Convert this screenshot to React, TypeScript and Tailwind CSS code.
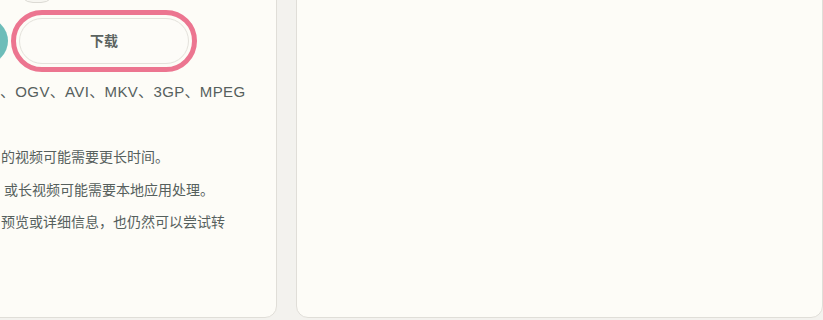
import React from "react";

export default function App() {
  const font = {
    fontFamily: '"Liberation Sans", "Noto Sans CJK SC", sans-serif',
  };
  return (
    <div
      className="flex h-[320px] w-[823px] overflow-hidden bg-[#f3f2ee] pb-[2px] gap-[19px]"
      style={font}
    >
      {/* Left panel (cropped) */}
      <div className="-ml-[60px] -mt-[40px] flex w-[337px] shrink-0 flex-col rounded-[12px] border border-[#e0ded8] bg-[#fdfcf7] pl-[59px] pt-[12px] text-[#56605d]">
        <div className="flex h-[30px]">
          <div className="ml-[18px] h-[30px] w-[38px] rounded-full border border-[#dcdad4] bg-[#f7f6f1]" />
        </div>
        <div className="mt-[15px] flex h-[46px] items-center">
          <div className="-ml-[38px] h-[46px] w-[46px] shrink-0 rounded-full bg-[#6dbdb9]" />
          <button className="ml-[11px] flex h-[46px] w-[170px] shrink-0 items-center justify-center rounded-full border border-[#e4e2dc] bg-[#fdfcf8] text-[14px] font-bold text-[#5b6360] outline-[5px] outline-offset-[3px] outline-solid outline-[#ec7590]">
            下载
          </button>
        </div>
        <div className="mt-[18px] whitespace-nowrap text-[15px] leading-[20px] tracking-[0.35px]">
          、OGV、AVI、MKV、3GP、MPEG
        </div>
        <div className="ml-[1px] mt-[45px] whitespace-nowrap text-[14px] leading-[20px]">
          的视频可能需要更长时间。
        </div>
        <div className="-ml-[10px] mt-[13px] whitespace-nowrap text-[14px] leading-[20px]">
          ，或长视频可能需要本地应用处理。
        </div>
        <div className="ml-[1px] mt-[12px] whitespace-nowrap text-[14px] leading-[20px]">
          预览或详细信息，也仍然可以尝试转
        </div>
      </div>

      {/* Right panel */}
      <div className="-mt-[40px] flex-1 rounded-[12px] border border-[#e0ded8] bg-[#fdfcf7]" />
    </div>
  );
}
